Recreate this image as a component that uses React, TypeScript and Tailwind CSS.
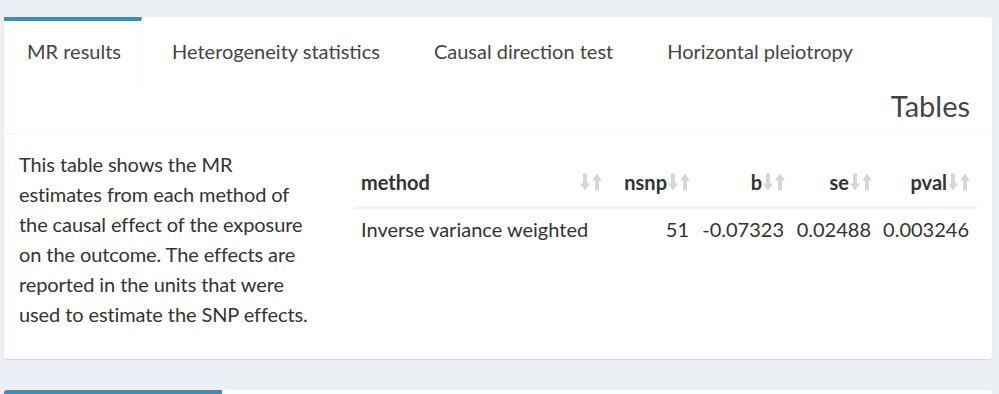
import React from "react";

const tabs = ["MR results", "Heterogeneity statistics", "Causal direction test", "Horizontal pleiotropy"];

const cols = [
  { key: "method", label: "method", width: 255, align: "left" },
  { key: "nsnp", label: "nsnp", width: 88, align: "right" },
  { key: "b", label: "b", width: 95, align: "right" },
  { key: "se", label: "se", width: 87, align: "right" },
  { key: "pval", label: "pval", width: 98, align: "right" },
];

const row: Record<string, string> = {
  method: "Inverse variance weighted",
  nsnp: "51",
  b: "-0.07323",
  se: "0.02488",
  pval: "0.003246",
};

function SortIcon() {
  return (
    <svg width="22" height="19" viewBox="0 0 22 19" className="absolute right-[7px] top-1/2 -translate-y-1/2">
      <g fill="#d6d6d6">
        <rect x="3" y="1" width="4" height="12" />
        <path d="M0 11h10l-5 7z" />
        <rect x="15" y="6" width="4" height="12" />
        <path d="M12 8h10l-5-7z" />
      </g>
    </svg>
  );
}

export default function App() {
  return (
    <div className="min-h-screen bg-[#ecf0f5] px-[4px] pt-[17px] pr-[7px] text-[20px] leading-[30px] text-[#333]" style={{ fontFamily: "Lato, 'Noto Sans', sans-serif" }}>
      <div className="rounded-[3px] bg-white shadow-[0_1px_1px_rgba(0,0,0,0.1)]">
        <ul className="flex flex-wrap border-b border-[#f4f4f4] text-[#444]">
          {tabs.map((t, i) => (
            <li
              key={t}
              className={
                i === 0
                  ? "flex h-[65px] items-center border-t-4 border-r border-t-[#3c8dbc] border-r-[#f4f4f4] pl-[23px] pr-[20px] pb-[1px]"
                  : "ml-[6px] flex h-[65px] items-center border-t-4 border-t-transparent px-[24px] pb-[1px]"
              }
            >
              {t}
            </li>
          ))}
          <li className="w-full pr-[22px] pt-[5px] pb-[8px] text-right text-[29px] leading-[38px] text-[#444]">Tables</li>
        </ul>
        <div className="flex gap-[43px] p-[15px]">
          <p className="mb-[15px] w-[292px] shrink-0 tracking-[-0.1px]">
            This table shows the MR estimates from each method of the causal effect of the exposure on the outcome. The effects are reported in the units that were used to estimate the SNP effects.
          </p>
          <div className="flex-1 pt-[8px]">
            <table className="w-full table-fixed border-collapse">
              <colgroup>
                {cols.map((c) => (
                  <col key={c.key} style={{ width: c.width }} />
                ))}
              </colgroup>
              <thead>
                <tr className="border-b-[3px] border-[#f4f4f4]">
                  {cols.map((c) => (
                    <th
                      key={c.key}
                      className={
                        c.align === "left"
                          ? "relative pl-[7px] pr-[30px] pt-[10px] pb-[9px] text-left font-bold text-[#333]"
                          : "relative pl-[7px] pr-[30px] pt-[10px] pb-[9px] text-right font-bold text-[#333]"
                      }
                    >
                      {c.label}
                      <SortIcon />
                    </th>
                  ))}
                </tr>
              </thead>
              <tbody>
                <tr>
                  {cols.map((c) => (
                    <td key={c.key} className={c.align === "left" ? "pt-[5px] pb-[10px] pl-[7px] text-left" : "pt-[5px] pb-[10px] pr-[8px] text-right"}>
                      {row[c.key]}
                    </td>
                  ))}
                </tr>
              </tbody>
            </table>
          </div>
        </div>
      </div>
      <div className="mt-[31px] rounded-[3px] bg-white">
        <div className="h-[5px] w-[218px] rounded-tl-[3px] bg-[#3c8dbc]" />
      </div>
    </div>
  );
}
